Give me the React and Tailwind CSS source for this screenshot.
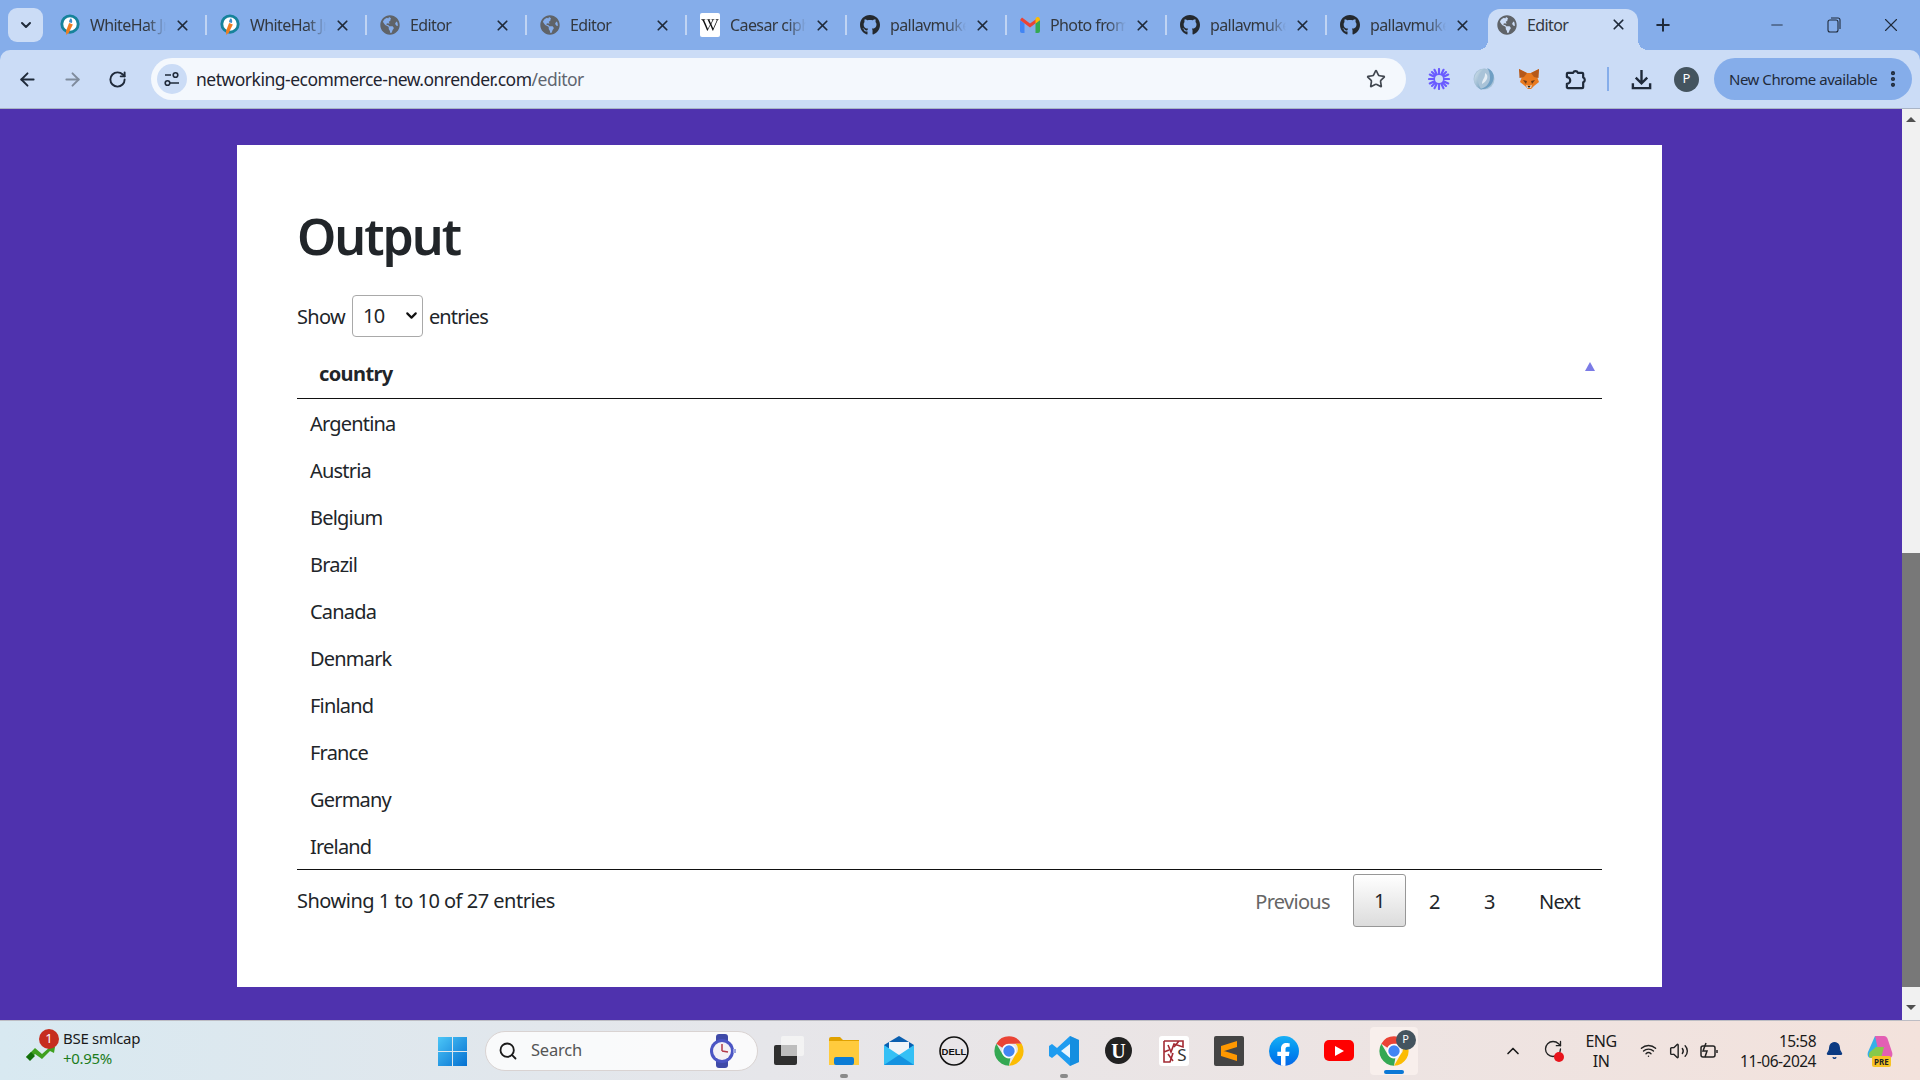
import React from 'react';
import { ArrowLeft, ArrowRight, RotateCw, Star, X, Plus, Minus, ChevronDown, ChevronUp, EllipsisVertical, Search, Bell, Wifi, Volume2 } from 'lucide-react';
import { FaGithub, FaGlobeAmericas, FaWikipediaW, FaFacebookF } from 'react-icons/fa';

const sans = 'font-["Noto_Sans","Open_Sans",sans-serif]';

function ChromeLogo({ size = 36 }) {
  return (
    <svg width={size} height={size} viewBox="0 0 48 48">
      <path d="M24 2a22 22 0 0 1 19 11H24a11 11 0 0 0-10 6L5 13A22 22 0 0 1 24 2z" fill="#ea4335" />
      <path d="M43 13a22 22 0 0 1-19 33l10-17a11 11 0 0 0 0-16z" fill="#fbbc04" />
      <path d="M5 13l10 17a11 11 0 0 0 11 5l-2 11A22 22 0 0 1 5 13z" fill="#34a853" />
      <circle cx="24" cy="24" r="10.5" fill="#fff" />
      <circle cx="24" cy="24" r="8.5" fill="#4285f4" />
    </svg>
  );
}

function WhiteHat() {
  return (
    <svg width="21" height="24" viewBox="0 0 21 24">
      <circle cx="10.5" cy="11" r="8.6" fill="#fff" stroke="#16839b" strokeWidth="3" />
      <path d="M9.500 10l4 1.500-4 8-2.800 3-.4-4z" fill="#ef7d22" />
      <path d="M11.500 5c1.400 1.400 1.600 3 1 5l-3-1c0-1.700.6-3 2-4z" fill="#3d8fc9" />
    </svg>
  );
}

function Gmail() {
  return (
    <svg width="20" height="16" viewBox="0 0 20 16">
      <path d="M0 3v11a2 2 0 0 0 2 2h2.500V6.500z" fill="#4285f4" />
      <path d="M20 3v11a2 2 0 0 1-2 2h-2.500V6.500z" fill="#34a853" />
      <path d="M0 3l10 7.500L20 3l-1.500-2.600L10 6.500 2 .4z" fill="#ea4335" />
      <path d="M15.500 6.500L20 3c0-2.500-2-3.500-3.500-2.500l-1 .8z" fill="#fbbc04" />
    </svg>
  );
}

function TabIcon({ kind }) {
  if (kind === 'wh') return <WhiteHat />;
  if (kind === 'globe') return <FaGlobeAmericas size={20} color="#5f6368" />;
  if (kind === 'wiki') return <span className="w-[20px] h-[24px] bg-white rounded-[2px] flex items-center justify-center"><FaWikipediaW size={18} color="#111" /></span>;
  if (kind === 'gh') return <FaGithub size={24} color="#24292f" />;
  return <Gmail />;
}

const tabs = [
  ['WhiteHat Jr', 'wh'], ['WhiteHat Jr', 'wh'], ['Editor', 'globe'], ['Editor', 'globe'],
  ['Caesar cipher', 'wiki'], ['pallavmukerjee', 'gh'], ['Photo from', 'gmail'], ['pallavmukerjee', 'gh'], ['pallavmukerjee', 'gh'],
];

function Tab({ title, kind, sep }) {
  return (
    <div className="relative w-[160px] h-full flex items-center shrink-0">
      <span className="w-[20px] ml-[14px] flex justify-center shrink-0"><TabIcon kind={kind} /></span>
      <span className="ml-[10px] w-[76px] overflow-hidden whitespace-nowrap text-[16px] leading-[20px] tracking-[-0.6px] text-[#33383f] [mask-image:linear-gradient(to_right,black_75%,transparent)]">{title}</span>
      <X size={17} strokeWidth={2.4} className="ml-[8px] text-[#1f2a3a] shrink-0" />
      {sep && <span className="absolute right-[-1px] top-[15px] w-[2px] h-[20px] bg-[#c0d4f3]" />}
    </div>
  );
}

function TabStrip() {
  return (
    <div className="h-[50px] bg-[#85adea] flex items-center shrink-0">
      <div className="ml-[8px] mr-[3px] w-[35px] h-[34px] rounded-[9px] bg-[#cbdcf6] flex items-center justify-center">
        <ChevronDown size={16} strokeWidth={3} className="text-[#1f2a3a]" />
      </div>
      {tabs.map((t, i) => <Tab key={i} title={t[0]} kind={t[1]} sep={i < 8} />)}
      <div className="relative ml-[2px] self-end h-[41px] w-[150px] bg-[#cbdcf6] rounded-t-[12px] flex items-start shrink-0 pt-[5px]">
        <span className="absolute bottom-0 left-[-10px] w-[10px] h-[10px] bg-[radial-gradient(circle_at_0_0,transparent_10px,#cbdcf6_10px)]" />
        <span className="absolute bottom-0 right-[-10px] w-[10px] h-[10px] bg-[radial-gradient(circle_at_100%_0,transparent_10px,#cbdcf6_10px)]" />
        <span className="ml-[9px] mt-[1px]"><FaGlobeAmericas size={20} color="#5f6368" /></span>
        <span className="ml-[10px] w-[83px] text-[16px] leading-[22px] tracking-[-0.6px] text-[#33383f]">Editor</span>
        <X size={17} strokeWidth={2.4} className="mt-[2px] text-[#1f2a3a]" />
      </div>
      <Plus size={20} strokeWidth={2.4} className="ml-[15px] text-[#1f2a3a]" />
      <div className="ml-auto flex items-center">
        <span className="w-[56px] mr-[1px] flex justify-center"><Minus size={18} strokeWidth={1.2} className="text-[#1f2a3a]" /></span>
        <span className="w-[56px] mr-[1px] flex justify-center">
          <svg width="14" height="16" viewBox="0 0 14 16" fill="none" stroke="#1f2a3a" strokeWidth="1.100"><rect x="1" y="3" width="10" height="12" rx="2" /><path d="M4 1h7a2 2 0 0 1 2 2v9" /></svg>
        </span>
        <span className="w-[56px] mr-[1px] flex justify-center"><X size={22} strokeWidth={1.2} className="text-[#1f2a3a]" /></span>
      </div>
    </div>
  );
}

function Snowflake() {
  return (
    <svg width="22" height="22" viewBox="0 0 22 22" stroke="#6a5cff" strokeWidth="2.100" strokeLinecap="round">
      <path d="M11 1v20M1 11h20M4 4l14 14M18 4L4 18M6.500 1.800l9 18.400M15.500 1.800l-9 18.400M1.800 6.500l18.400 9M1.800 15.500l18.400-9" />
      <circle cx="11" cy="11" r="4" fill="#cbdcf6" stroke="none" />
    </svg>
  );
}

function Swirl() {
  return (
    <svg width="22" height="24" viewBox="0 0 22 24">
      <defs>
        <linearGradient id="sw" x1="0" y1="0" x2="1" y2="1"><stop offset="0" stopColor="#dbe7ef" /><stop offset="1" stopColor="#5d8fb5" /></linearGradient>
      </defs>
      <circle cx="11" cy="12" r="10.500" fill="#a9c3d8" />
      <path d="M14 1c6 2 8 8 6 13-2 6-8 9-13 8 5-1 10-5 10-11 0-4-1-8-3-10z" fill="#6f9fc4" />
      <path d="M9 23C3 21 0 15 2 9c2-5 7-8 11-7-5 2-8 5-8 11 0 4 2 8 4 10z" fill="url(#sw)" />
      <path d="M12 6c2 1 3 3 2 6-1 2-3 4-5 5 0-3 1-4 2-6 1-2 1-3 1-5z" fill="#e4edf5" />
    </svg>
  );
}

function Fox() {
  return (
    <svg width="22" height="22" viewBox="0 0 22 22">
      <path d="M1 1l8 4h4l8-4-1.500 9 1.500 4-5 4-3 3h-3l-3-3-5-4 1.500-4z" fill="#e8791e" />
      <path d="M1 1l8 4-3 4-4.500 1zM21 1l-8 4 3 4 4.500 1z" fill="#b5591a" />
      <path d="M5 12l4 1-1 3zM17 12l-4 1 1 3z" fill="#6b3a17" />
      <path d="M8 17l3 1 3-1-1 3h-4z" fill="#e2d2c2" />
      <path d="M9.500 18h3l-1.500 2z" fill="#222" />
    </svg>
  );
}

function Toolbar() {
  return (
    <div className="h-[59px] bg-[#cbdcf6] rounded-tl-[10px] rounded-tr-[10px] flex items-center border-b border-[#a9b4c6] shrink-0">
      <ArrowLeft size={21} strokeWidth={2.2} className="ml-[17px] text-[#1f2a3a]" />
      <ArrowRight size={21} strokeWidth={2.2} className="ml-[24px] text-[#7f8b9c]" />
      <RotateCw size={19} strokeWidth={2.4} className="ml-[25px] text-[#1f2a3a]" />
      <div className="ml-[24px] w-[1255px] h-[42px] rounded-full bg-[#f4f8fd] flex items-center">
        <span className="ml-[6px] w-[30px] h-[30px] rounded-full bg-[#cbdcf6] flex items-center justify-center">
          <svg width="16" height="16" viewBox="0 0 16 16" fill="none" stroke="#1f2a3a" strokeWidth="1.600"><path d="M1 4h6M6 12h9" /><circle cx="11.500" cy="4" r="2.300" /><circle cx="3.500" cy="12" r="2.300" /></svg>
        </span>
        <span className="ml-[9px] text-[17.5px] leading-[24px] tracking-[-0.5px] text-[#1f2430] whitespace-nowrap">networking-ecommerce-new.onrender.com<span className="text-[#5f6670]">/editor</span></span>
        <Star size={20} strokeWidth={2} className="ml-auto mr-[20px] text-[#414750]" />
      </div>
      <span className="ml-[22px] w-[22px] flex justify-center"><Snowflake /></span>
      <span className="ml-[23px] w-[22px] flex justify-center"><Swirl /></span>
      <span className="ml-[23px] w-[22px] flex justify-center"><Fox /></span>
      <svg className="ml-[24px]" width="23" height="23" viewBox="0 0 24 24" fill="none" stroke="#1f2a3a" strokeWidth="2.300" strokeLinejoin="round">
        <path d="M4 5h5.500a2.700 2.700 0 0 1 5 0H19a1 1 0 0 1 1 1v4a2.700 2.700 0 0 1 0 5v5a1 1 0 0 1-1 1H4a1 1 0 0 1-1-1v-3.500a3 3 0 0 0 0-7V6a1 1 0 0 1 1-1z" />
      </svg>
      <span className="ml-[20px] w-[2px] h-[24px] bg-[#85adea]" />
      <svg className="ml-[21px]" width="23" height="23" viewBox="0 0 24 24" fill="none" stroke="#1f2a3a" strokeWidth="2.500">
        <path d="M12 2v14M6 10l6 6 6-6M3 16v5h18v-5" />
      </svg>
      <span className="ml-[21px] w-[25px] h-[25px] rounded-full bg-[#44545f] text-white text-[13px] flex items-center justify-center">P</span>
      <div className="ml-[15px] w-[198px] h-[42px] rounded-full bg-[#85adea] flex items-center">
        <span className="ml-[15px] text-[15px] tracking-[-0.47px] text-[#1f2a3a] whitespace-nowrap">New Chrome available</span>
        <EllipsisVertical size={20} strokeWidth={3} className="ml-auto mr-[9px] text-[#1f2a3a]" />
      </div>
    </div>
  );
}

const countries = ['Argentina', 'Austria', 'Belgium', 'Brazil', 'Canada', 'Denmark', 'Finland', 'France', 'Germany', 'Ireland'];

function Card() {
  return (
    <div className="ml-[237px] w-[1425px] h-[842px] bg-white px-[60px] pt-[61px] text-[#212529]">
      <h1 className="text-[50px] leading-[60px] font-semibold tracking-[-2px]">Output</h1>
      <div className="mt-[29px] h-[42px] flex items-center text-[20px] tracking-[-0.7px]">
        <span className="pt-[2px]">Show</span>
        <div className="relative ml-[7px] w-[71px] h-[42px]">
          <select className="appearance-none w-full h-full border border-[#a9a9a9] rounded-[4px] pl-[10px] text-[20px] bg-white text-[#212529]" defaultValue="10">
            <option>10</option>
            <option>25</option>
            <option>50</option>
            <option>100</option>
          </select>
          <ChevronDown size={17} strokeWidth={3} className="absolute right-[3px] top-[12px] text-[#111] pointer-events-none" />
        </div>
        <span className="ml-[6px] pt-[2px] tracking-[-0.9px]">entries</span>
      </div>
      <table className="mt-[13px] w-full border-collapse">
        <thead>
          <tr className="h-[48px] border-b border-[#111]">
            <th className="relative pl-[22px] text-left text-[20px] font-bold tracking-[-0.6px]">
              country
              <span className="absolute right-[7px] top-[12px] w-0 h-0 border-x-[5px] border-x-transparent border-b-[9px] border-b-[#7b7be6]" />
            </th>
          </tr>
        </thead>
        <tbody>
          {countries.map(c => (
            <tr key={c} className="h-[47px]"><td className="pl-[13px] pt-[4px] text-[20px] tracking-[-0.8px]">{c}</td></tr>
          ))}
        </tbody>
      </table>
      <div className="mt-[1px] border-t border-[#111] flex items-start justify-between">
        <div className="mt-[17px] text-[20px] leading-[28px] tracking-[-0.5px]">Showing 1 to 10 of 27 entries</div>
        <div className="mt-[4px] mr-[1px] flex items-center text-[20px] tracking-[-0.7px] h-[53px]">
          <span className="px-[21px] pt-[2px] text-[#666]">Previous</span>
          <span className="ml-[2px] w-[53px] h-[53px] flex items-center justify-center border border-[#979797] rounded-[3px] bg-gradient-to-b from-white to-[#dcdcdc]">1</span>
          <span className="ml-[2px] w-[53px] pt-[2px] text-center">2</span>
          <span className="ml-[2px] w-[53px] pt-[2px] text-center">3</span>
          <span className="ml-[2px] px-[21px] pt-[2px]">Next</span>
        </div>
      </div>
    </div>
  );
}

function Scrollbar() {
  return (
    <div className="w-[18px] bg-[#f1f1f1] flex flex-col items-center shrink-0">
      <span className="mt-[8px] w-0 h-0 border-x-[5px] border-x-transparent border-b-[5px] border-b-[#505050]" />
      <span className="mt-[431px] w-full h-[434px] bg-[#787878]" />
      <span className="mt-[18px] w-0 h-0 border-x-[5px] border-x-transparent border-t-[5px] border-t-[#505050]" />
    </div>
  );
}

const Slot = ({ children, dot, cls = '' }) => (
  <div className={`relative w-[55px] h-[60px] flex items-center justify-center shrink-0 ${cls}`}>
    {children}
    {dot && <span className="absolute bottom-[3px] w-[8px] h-[4px] rounded-full bg-[#8a8a8a]" />}
  </div>
);

function Taskbar() {
  return (
    <div className="h-[60px] border-t border-[#bdbdc4] bg-gradient-to-r from-[#d8e9f1] via-[#e6e6ea] via-40% to-[#f3e2dc] flex items-center shrink-0">
      <div className="relative w-[452px] h-full flex shrink-0">
        <svg className="absolute left-[26px] top-[24px]" width="30" height="18" viewBox="0 0 30 18"><path d="M0 12l9-9 7 6 8-7 5 0-1 6-4-2-8 8-7-5-5 5z" fill="#3fa01f" /><path d="M0 12l5-5 4 4-5 5z" fill="#136f0b" /></svg>
        <span className="absolute left-[39px] top-[8px] w-[20px] h-[20px] rounded-full bg-[#c62d1f] text-white text-[13px] flex items-center justify-center">1</span>
        <div className="ml-[63px] mt-[7px] text-[15px] leading-[20px] tracking-[-0.3px]">
          <div className="text-[#1a1a1a]">BSE smlcap</div>
          <div className="text-[#1c7c1c]">+0.95%</div>
        </div>
        <svg className="absolute left-[438px] top-[16px]" width="29" height="29" viewBox="0 0 29 29">
          <defs><linearGradient id="w" x1="0" y1="0" x2="1" y2="1"><stop offset="0" stopColor="#4cc6f7" /><stop offset="1" stopColor="#0570d1" /></linearGradient></defs>
          <path d="M0 0h14v14H0zM15 0h14v14H15zM0 15h14v14H0zM15 15h14v14H15z" fill="url(#w)" />
        </svg>
      </div>
      <div className="ml-[33px] w-[273px] h-[40px] rounded-full bg-white/80 border border-[#d9d3d2] flex items-center shrink-0">
        <Search size={20} strokeWidth={2.200} className="ml-[12px] text-[#1a1a1a]" />
        <span className="ml-[13px] text-[16.500px] tracking-[-0.2px] text-[#555]">Search</span>
        <svg className="ml-auto mr-[21px]" width="28" height="34" viewBox="0 0 28 34">
          <rect x="8" y="0" width="12" height="34" rx="3" fill="#3f4aa8" />
          <circle cx="14" cy="17" r="12" fill="#4b55c4" /><circle cx="14" cy="17" r="9" fill="#f3f1f6" />
          <path d="M14 17V10M14 17l6 1" stroke="#b33a4a" strokeWidth="1.500" /><rect x="25" y="15" width="3" height="4" fill="#9aa3e0" />
        </svg>
      </div>
      <Slot cls="ml-[3px]">
        <svg width="30" height="29" viewBox="0 0 30 29"><rect x="0" y="9" width="23" height="20" rx="2" fill="#2f2f2f" /><rect x="7" y="0" width="23" height="20" rx="2" fill="#f5f5f5" fillOpacity=".85" /><rect x="7" y="9" width="16" height="11" fill="#bdbdbd" /></svg>
      </Slot>
      <Slot dot>
        <svg width="30" height="28" viewBox="0 0 30 28"><path d="M0 2a2 2 0 0 1 2-2h9l3 3h16v4H0z" fill="#e0a100" /><rect y="4" width="30" height="24" fill="#ffcb3d" /><rect x="5" y="20" width="20" height="8" rx="2" fill="#0c7cd5" /></svg>
      </Slot>
      <Slot>
        <svg width="30" height="29" viewBox="0 0 30 29"><path d="M15 0l15 9v3H0V9z" fill="#0a5fb0" /><path d="M5 6h20v12H5z" fill="#eef3f8" /><path d="M0 9l15 10L30 9v20H0z" fill="#35c0f5" /><path d="M0 29l15-10 15 10z" fill="#1492e0" /></svg>
      </Slot>
      <Slot>
        <svg width="30" height="30" viewBox="0 0 30 30"><circle cx="15" cy="15" r="14" fill="none" stroke="#111" strokeWidth="1.600" /><text x="15" y="18.500" textAnchor="middle" fontSize="9.500" fontWeight="800" fontFamily="Liberation Sans" fill="#111">DELL</text></svg>
      </Slot>
      <Slot><ChromeLogo size={32} /></Slot>
      <Slot dot>
        <svg width="30" height="30" viewBox="0 0 30 30"><path d="M21 0l9 4v22l-9 4L8 18l-5 4-3-2V10l3-2 5 4z" fill="#1f9cf0" /><path d="M21 8v14l-9-7z" fill="#fff" fillOpacity=".9" /><path d="M21 0l9 4v22l-9 4z" fill="#0b7fd0" fillOpacity=".5" /></svg>
      </Slot>
      <Slot>
        <span className="w-[27px] h-[27px] rounded-full bg-[#222] text-white text-[20px] font-bold flex items-center justify-center font-['Liberation_Serif']">U</span>
      </Slot>
      <Slot>
        <span className="relative w-[30px] h-[30px] rounded-[3px] bg-white block overflow-hidden">
          <svg className="absolute left-0 top-0" width="30" height="30" viewBox="0 0 30 30" fill="none" stroke="#a32a33" strokeWidth="1.600">
            <path d="M5 5h19v6L15 8l-3 8-3-7M5 5v21h6l3-9M5 16l5-2M20 5l-5 6" />
            <path d="M9 18l5 7" />
          </svg>
          <span className="absolute right-[2px] bottom-[3px] text-[17px] leading-[17px] text-[#333]">S</span>
        </span>
      </Slot>
      <Slot>
        <span className="w-[30px] h-[30px] rounded-[2px] bg-[#444] flex items-center justify-center">
          <svg width="18" height="20" viewBox="0 0 18 20" fill="#ff9800"><path d="M17 0v6L1 11V5zM1 9l16 5v6L1 15z" /></svg>
        </span>
      </Slot>
      <Slot>
        <span className="w-[30px] h-[30px] rounded-full bg-gradient-to-b from-[#19aff5] to-[#0866e8] flex items-end justify-center overflow-hidden"><FaFacebookF size={23} color="#fff" /></span>
      </Slot>
      <Slot>
        <span className="w-[30px] h-[21px] rounded-[5px] bg-[#f00] flex items-center justify-center">
          <svg width="10" height="10" viewBox="0 0 10 10"><path d="M1 0l9 5-9 5z" fill="#fff" /></svg>
        </span>
      </Slot>
      <Slot>
        <div className="relative w-[48px] h-[48px] rounded-[4px] bg-[#f8efec] flex items-center justify-center">
          <ChromeLogo size={32} />
          <span className="absolute right-[2px] top-[3px] w-[20px] h-[20px] rounded-full bg-[#44545f] text-white text-[11px] flex items-center justify-center">P</span>
          <span className="absolute bottom-[1px] w-[20px] h-[4px] rounded-full bg-[#0a78d6]" />
        </div>
      </Slot>
      <ChevronUp size={20} strokeWidth={2} className="ml-[82px] text-[#1a1a1a] shrink-0" />
      <span className="relative ml-[20px] w-[21px] h-[24px] shrink-0">
        <RotateCw size={20} strokeWidth={1.600} className="text-[#222]" />
        <span className="absolute right-[0px] bottom-[1px] w-[10px] h-[10px] rounded-full bg-[#e8141c]" />
      </span>
      <div className="ml-[20px] w-[34px] text-center text-[16px] leading-[20px] tracking-[-0.5px] text-[#1a1a1a] shrink-0 whitespace-nowrap">ENG<br />IN</div>
      <Wifi size={17} strokeWidth={2} className="ml-[22px] text-[#222] shrink-0" />
      <Volume2 size={20} strokeWidth={1.700} className="ml-[12px] text-[#222] shrink-0" />
      <svg className="ml-[10px] shrink-0" width="20" height="18" viewBox="0 0 20 18" fill="none" stroke="#222" strokeWidth="1.500"><rect x="2" y="4" width="14" height="11" rx="2" /><path d="M18 8v3" /><path d="M7 1L4 9h4l-2 6" /></svg>
      <div className="ml-[9px] w-[88px] text-right text-[15.500px] leading-[20px] tracking-[-0.5px] text-[#1a1a1a] shrink-0 whitespace-nowrap">15:58<br />11-06-2024</div>
      <Bell size={19} fill="#0b3a82" strokeWidth={1.500} className="ml-[9px] text-[#0b3a82] shrink-0" />
      <div className="relative ml-[23px] w-[28px] h-[32px] shrink-0">
        <svg width="26" height="24" viewBox="0 0 26 24"><path d="M8 1h9l-6 22H4C1 23 0 20 1 17z" fill="#34b0e8" /><path d="M8 1h9c2 0 3 1 4 4l4 12c1 3 0 6-3 6h-9z" fill="#e35fb4" /><path d="M9 12h8l-3 11H4C2 23 1 20 3 17z" fill="#88c94a" /></svg>
        <span className="absolute left-[5px] bottom-0 h-[11px] px-[2px] bg-[#f7c325] text-[8px] leading-[11px] font-bold text-[#222] rounded-[2px]">PRE</span>
      </div>
    </div>
  );
}

export default function App() {
  return (
    <div className={`w-[1920px] h-[1080px] overflow-hidden flex flex-col ${sans} bg-[#85adea]`}>
      <TabStrip />
      <Toolbar />
      <div className="flex-1 flex bg-[#4f32ae] min-h-0">
        <div className="flex-1 pt-[36px]"><Card /></div>
        <Scrollbar />
      </div>
      <Taskbar />
    </div>
  );
}
